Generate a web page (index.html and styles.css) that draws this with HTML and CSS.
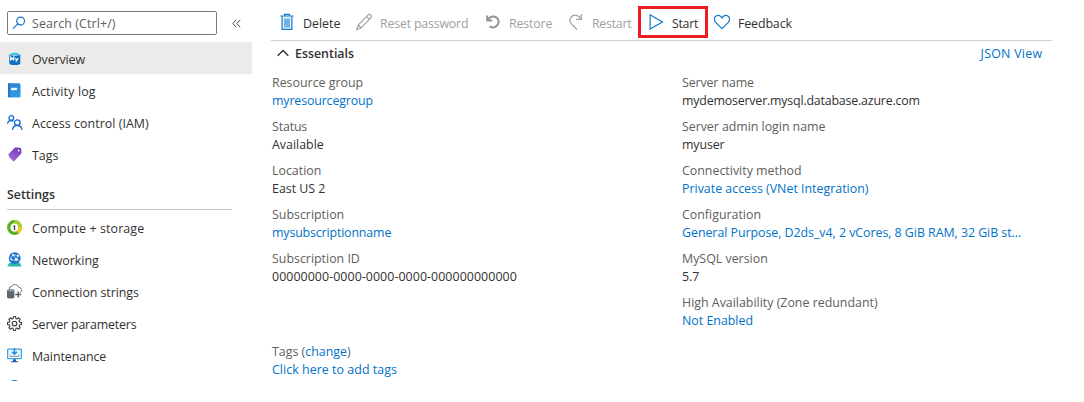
FILE: index.html
```html
<!DOCTYPE html>
<html lang="en">
<head>
<meta charset="utf-8">
<title>Azure Database for MySQL</title>
<link rel="stylesheet" href="styles.css">
</head>
<body>
<div class="app">
  <nav class="sidebar">
    <div class="search-row">
      <div class="search">
        <svg width="14" height="14" viewBox="0 0 14 14" fill="none" stroke="#0f6fc6" stroke-width="1.1"><circle cx="8.6" cy="5" r="3.9"/><path d="M5.8 7.8 1 12.6"/></svg>
        <span class="t-search">Search (Ctrl+/)</span>
      </div>
      <svg class="collapse" width="9" height="9" viewBox="0 0 9 9" fill="none" stroke="#505050" stroke-width="1"><path d="M4.2.8.8 4.5l3.4 3.7M8.2.8 4.8 4.5l3.4 3.7"/></svg>
    </div>
    <ul class="menu">
      <li class="item active">
        <svg width="16" height="16" viewBox="0 0 16 16"><path d="M2.3 3v9.200c0 1.200 2.500 1.900 5.500 1.900s5.500-.7 5.500-1.900V3z" fill="#0f6fc2"/><ellipse cx="7.800" cy="2.800" rx="5.500" ry="1.900" fill="#dff3f7"/><ellipse cx="7.800" cy="2.900" rx="4.200" ry="1.200" fill="#32c8e4"/><path d="M3.700 9.500V6.300l1.500 2 1.500-2v3.200M8.400 7.100l1.300 2.300 1.500-2.300M9.700 9.400l-.8 1.300" fill="none" stroke="#fff" stroke-width="1.200"/></svg>
        <span class="t-overview">Overview</span></li>
      <li class="item">
        <svg width="16" height="16" viewBox="0 0 16 16"><defs><linearGradient id="book" x1="0" y1="0" x2="0" y2="1"><stop offset="0" stop-color="#2b86d3"/><stop offset="1" stop-color="#2f9ae6"/></linearGradient></defs><rect x="2" y="1" width="12" height="13.500" rx="1" fill="#8fc7ee"/><rect x="1" y=".3" width="12" height="14" rx="1" fill="url(#book)"/><path d="M1 .3h1.700v14H1z" fill="#2575bd"/><rect x="4" y="4.800" width="6" height="2.400" fill="#eef7ff"/></svg>
        <span class="t-activity">Activity log</span></li>
      <li class="item">
        <svg width="16" height="16" viewBox="0 0 16 16" fill="none" stroke="#1a6cd4" stroke-width="1.300"><circle cx="4.300" cy="3" r="2.300"/><path d="M.6 8.800C.8 6.800 2.300 5.500 4 5.500c1 0 1.800.3 2.400.8"/><circle cx="10.300" cy="7.600" r="2.800"/><path d="M5.500 15c.2-2.700 2.200-4.500 4.700-4.500s4.500 1.800 4.800 4.500"/></svg>
        <span class="t-access">Access control (IAM)</span></li>
      <li class="item">
        <svg width="16" height="16" viewBox="0 0 16 16"><defs><linearGradient id="tag" x1="1" y1="0" x2="0" y2="1"><stop offset="0" stop-color="#6b2fb5"/><stop offset="1" stop-color="#a779dd"/></linearGradient></defs><path d="M8 .4h3.500c.5 0 .9.400.9.900v4.400L6 12.500 1.300 7.700z" fill="#7a3bc8"/><path d="M9.300 1h4c.6 0 1 .4 1 1v4.400l-7 7.500c-.4.4-.9.400-1.300 0l-4-4c-.4-.4-.4-.9 0-1.300z" fill="url(#tag)"/><circle cx="11.700" cy="3.400" r="1" fill="#fff"/></svg>
        <span class="t-tags">Tags</span></li>
    </ul>
    <h2 class="group"><span>Settings</span></h2>
    <ul class="menu">
      <li class="item">
        <svg width="16" height="16" viewBox="0 0 16 16" fill="none" stroke-width="3.300"><circle cx="7.500" cy="7.500" r="5.800" stroke="#5fae1e"/><path d="M7.500 1.700a5.800 5.800 0 0 1 5.700 4.600" stroke="#a6d033"/><path d="M13.200 6.600a5.800 5.800 0 0 1-2.600 5.800" stroke="#f5cd1d"/><path d="M7.500 5.300v4.600" stroke="#333" stroke-width="1.300"/><path d="M7.500 7.400 6.200 6.200" stroke="#666" stroke-width=".9"/></svg>
        <span class="t-compute">Compute + storage</span></li>
      <li class="item">
        <svg width="16" height="16" viewBox="0 0 16 16"><path d="M2.300 10.800h10.400l2.100 3.700H.2z" fill="#28b7a9"/><circle cx="7.700" cy="6.200" r="5.900" fill="#1d72cf"/><path d="M3 5.800 6.500 3l4.500.3-1.800 4-3.900 1.200z" fill="none" stroke="#9fdcf8" stroke-width=".8"/><path d="M6.500 3 9.200 7.300l3.300 1.200" stroke="#9fdcf8" stroke-width=".8" fill="none"/><g fill="#fff"><circle cx="6.200" cy="3.100" r="1.200"/><circle cx="11" cy="3.800" r="1.100"/><circle cx="9.200" cy="7.500" r="1.500"/><circle cx="4.300" cy="7.300" r="1"/></g></svg>
        <span class="t-networking">Networking</span></li>
      <li class="item">
        <svg width="16" height="16" viewBox="0 0 16 16"><path d="M2.300 5A2.700 2.700 0 0 1 4.800 2.200 3.800 3.800 0 0 1 11.600 3.100a3.200 3.200 0 0 1 1.600 5.800" fill="none" stroke="#6d7780" stroke-width="1"/><path d="M0 6.200v7c0 .8 1.600 1.300 3.700 1.300s3.700-.5 3.700-1.300v-7z" fill="#5b6670"/><ellipse cx="3.700" cy="6.200" rx="3.700" ry="1.300" fill="#8d969e"/><path d="M11.200 7.500v6M8.200 10.500h6" stroke="#555f69" stroke-width="1.400"/></svg>
        <span class="t-connection">Connection strings</span></li>
      <li class="item">
        <svg width="16" height="16" viewBox="0 0 16 16" fill="none" stroke="#3b3b3b" stroke-width="1.150" stroke-linejoin="round"><path d="M6.500.5h2l.4 1.900 1.100.5 1.700-1.100 1.500 1.500-1.100 1.700.5 1.100 1.900.4v2l-1.900.4-.5 1.100 1.100 1.700-1.500 1.500-1.700-1.100-1.100.5-.4 1.900h-2l-.4-1.900-1.100-.5-1.700 1.100-1.500-1.500 1.100-1.700-.5-1.100L.5 8.500v-2l1.900-.4.500-1.100-1.100-1.700L3.300 1.800l1.700 1.100 1.100-.5z"/><circle cx="7.500" cy="7.500" r="2.300"/></svg>
        <span class="t-params">Server parameters</span></li>
      <li class="item">
        <svg width="16" height="16" viewBox="0 0 16 16"><rect x=".6" y="1.100" width="13.800" height="9.600" rx=".7" fill="#e9f6fe" stroke="#3aa5e8" stroke-width="1.200"/><path d="M7.500 0v6M5 3.800l2.500 2.400L10 3.800" fill="none" stroke="#2b92dd" stroke-width="1.600"/><path d="M3.300 6.800v1.600h8.400V6.800" fill="none" stroke="#888" stroke-width=".9"/><path d="M6 11.200h3v2.100h2.200v1H3.800v-1H6z" fill="#1c5da8"/></svg>
        <span class="t-maint">Maintenance</span></li>
      <li class="item">
        <svg width="16" height="16" viewBox="0 0 16 16"><ellipse cx="7.500" cy="3" rx="5" ry="3" fill="#1a6fd6"/></svg>
      </li>
    </ul>
  </nav>

  <main class="main">
    <div class="toolbar">
      <button class="cmd c-delete"><svg width="14" height="18" viewBox="0 0 14 18" fill="none" stroke="#1478c8" stroke-width="1.200"><path d="M2.100 3.200v13.200h9.800V3.200" fill="#e8f4fc"/><path d="M4 5.500h6v9H4z" fill="#6fb3e8" stroke="none"/><path d="M.3 3h13.400M4.600 3V1.300h4.800V3"/></svg><span>Delete</span></button>
      <button class="cmd off c-reset"><svg width="16" height="18" viewBox="0 0 16 18" fill="none" stroke="#a19f9d" stroke-width="1.100"><path d="M.8 16.700 2.200 12 12 2.100c.9-.8 2-.8 2.800 0 .8.800.8 1.900 0 2.800L5 14.900zM10.500 3.500l2.900 2.900M2.200 12 5 14.900"/></svg><span class="t-reset">Reset password</span></button>
      <button class="cmd off c-restore"><svg width="14" height="18" viewBox="0 0 14 18" fill="none" stroke="#979593" stroke-width="2"><path d="M1.200 2.500v5h5M1.700 7C4 2.800 9 2.400 11.400 5.400c2.200 2.900 1.100 7.300-2.300 8.600-1.800.700-3.700.5-5.500-.6"/></svg><span class="t-restore">Restore</span></button>
      <button class="cmd off c-restart"><svg width="14" height="18" viewBox="0 0 14 18" fill="none" stroke="#a19f9d" stroke-width="1.200"><path d="M12.300 1v5.300H7M12 6C9.800 1.800 4.800 1 2.200 4c-2 2.500-1.300 5.300.6 7.300l5.200 5.200"/></svg><span class="t-restart">Restart</span></button>
      <button class="cmd highlight"><svg width="15" height="18" viewBox="0 0 15 18" fill="none" stroke="#1478c8" stroke-width="1.200"><path d="M1.100 1.800v14.200L13.400 8.900z"/></svg><span class="t-start">Start</span></button>
      <button class="cmd c-feedback"><svg width="16" height="18" viewBox="0 0 16 18" fill="none" stroke="#1478c8" stroke-width="1.200"><path d="M8 15.700 1.700 9.400C-.1 7.500.1 4.400 2.100 3.100 4.200 1.800 6.800 2.500 8 5c1.200-2.500 3.800-3.200 5.900-1.900 2 1.300 2.200 4.400.4 6.300z"/></svg><span class="t-feedback">Feedback</span></button>
    </div>
    <div class="essentials">
      <svg width="12" height="8" viewBox="0 0 12 8" fill="none" stroke="#323130" stroke-width="1.400"><path d="M.7 6.700 6 1.500l5.300 5.200"/></svg>
      <span class="title">Essentials</span>
      <a class="t-json">JSON View</a>
    </div>
    <div class="details">
      <dl>
        <div><dt>Resource group</dt><dd class="link t-group">myresourcegroup</dd></div>
        <div><dt class="t-status">Status</dt><dd>Available</dd></div>
        <div><dt>Location</dt><dd>East US 2</dd></div>
        <div><dt>Subscription</dt><dd class="link t-subscription">mysubscriptionname</dd></div>
        <div><dt>Subscription ID</dt><dd class="t-id">00000000-0000-0000-0000-000000000000</dd></div>
      </dl>
      <dl>
        <div><dt class="t-server">Server name</dt><dd class="t-host">mydemoserver.mysql.database.azure.com</dd></div>
        <div><dt class="t-admin">Server admin login name</dt><dd class="t-user">myuser</dd></div>
        <div><dt>Connectivity method</dt><dd class="link">Private access (VNet Integration)</dd></div>
        <div><dt>Configuration</dt><dd class="link t-config">General Purpose, D2ds_v4, 2 vCores, 8 GiB RAM, 32 GiB st...</dd></div>
        <div><dt>MySQL version</dt><dd>5.7</dd></div>
        <div><dt>High Availability (Zone redundant)</dt><dd class="link">Not Enabled</dd></div>
      </dl>
    </div>
    <div class="tags">
      <div class="label">Tags (<a>change</a>)</div>
      <div><a class="t-click">Click here to add tags</a></div>
    </div>
  </main>
</div>
</body>
</html>
```
FILE: styles.css
```css
* { box-sizing: border-box; }
body { margin: 0; background: #fff; color: #323130; font: 12.4px/18px "Open Sans", "Noto Sans", sans-serif; white-space: nowrap; }
ul, dl, dd, h2 { margin: 0; padding: 0; list-style: none; }
svg { display: block; flex: none; }
.app { display: flex; width: 1084px; height: 402px; overflow: hidden; }
.sidebar { width: 252px; height: 381px; overflow: hidden; flex: none; padding-top: 11px; }
.search-row { display: flex; align-items: center; padding-left: 7px; height: 24px; margin-bottom: 7px; }
.search { display: flex; align-items: center; gap: 6px; width: 210px; height: 24px; padding-left: 4px; border: 1px solid #7a7977; border-radius: 2px; color: #605e5c; }
.search span { padding-top: 2px; }
.collapse { margin-left: 15px; }
.item { display: flex; align-items: center; gap: 9px; height: 32px; padding-left: 7px; }
.item svg { margin-top: 2px; }
.item span { padding-top: 4px; }
.item.active { background: #edebe9; }
.group { height: 41px; margin: -1px 20px 1px 7px; padding-top: 17px; border-bottom: 1px solid #c8c6c4; font-size: 12.4px; line-height: 18px; font-weight: 600; }
.main { flex: 1; min-width: 0; padding-left: 19px; }
.toolbar { display: flex; align-items: center; width: 781px; height: 41px; padding: 4px 0 0 9px; border-bottom: 1px solid #d2d0ce; }
.cmd { display: flex; align-items: center; gap: 9px; height: 32px; flex: none; padding: 0; border: 0; background: none; color: #323130; font: inherit; }
.cmd span { padding-top: 4px; }
.cmd.off { color: #a19f9d; }
.c-delete { width: 76px; }
.c-reset { width: 130px; gap: 8px; }
.c-restore { width: 83px; }
.c-restart { width: 69px; }
.cmd.highlight { width: 70px; gap: 8px; padding-left: 8px; border: 3px solid #ed1c24; }
.c-feedback { margin-left: 6px; gap: 8px; }
.essentials { display: flex; align-items: center; width: 771px; height: 24px; padding-left: 6px; gap: 6px; }
.essentials .title { flex: 1; padding-top: 2px; font-weight: 600; }
.essentials a { padding-top: 2px; }
.details { display: grid; grid-template-columns: 410px 1fr; padding: 9px 0 0 1px; }
dl { display: flex; flex-direction: column; gap: 8px; }
dt, .label { color: #605e5c; }
a, .link { color: #0072c9; }
.tags { padding: 13px 0 0 1px; }

/* Tracking */
.t-search { letter-spacing: .12px; }
.t-overview { letter-spacing: -.1px; }
.t-activity { letter-spacing: .16px; }
.t-access { letter-spacing: .05px; }
.t-compute { letter-spacing: .12px; }
.t-connection { letter-spacing: -.06px; }
.t-params { letter-spacing: -.18px; }
.t-maint { letter-spacing: -.08px; }
.t-reset { letter-spacing: -.2px; }
.t-restore { letter-spacing: -.16px; }
.t-restart { letter-spacing: -.28px; }
.t-start { letter-spacing: -.3px; }
.t-feedback { letter-spacing: -.12px; }
.t-json { letter-spacing: .25px; margin-right: -.25px; }
.t-group { letter-spacing: -.14px; }
.t-status { letter-spacing: -.15px; }
.t-subscription { letter-spacing: -.15px; }
.t-id { letter-spacing: .06px; }
.t-server, .t-user { letter-spacing: -.12px; }
.t-host { letter-spacing: -.19px; }
.t-admin, .t-config { letter-spacing: -.04px; }
.t-click { letter-spacing: .05px; }
```
